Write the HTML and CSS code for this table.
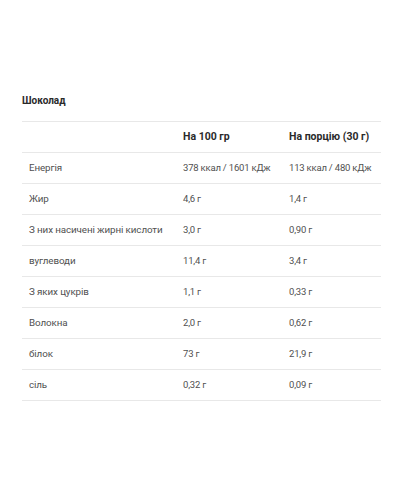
FILE: index.html
```html
<!DOCTYPE html>
<html lang="uk">
<head>
<meta charset="utf-8">
<link rel="stylesheet" href="styles.css">
</head>
<body>
<div class="wrap">
  <h2 class="title">Шоколад</h2>
  <table class="nutri">
    <colgroup><col class="c1"><col class="c2"><col class="c3"></colgroup>
    <thead>
      <tr><th></th><th>На 100 гр</th><th>На порцію (30 г)</th></tr>
    </thead>
    <tbody>
      <tr><td>Енергія</td><td class="num">378 ккал / 1601 кДж</td><td class="num">113 ккал / 480 кДж</td></tr>
      <tr><td>Жир</td><td class="num">4,6 г</td><td class="num">1,4 г</td></tr>
      <tr><td>З них насичені жирні кислоти</td><td class="num">3,0 г</td><td class="num">0,90 г</td></tr>
      <tr><td>вуглеводи</td><td class="num">11,4 г</td><td class="num">3,4 г</td></tr>
      <tr><td>З яких цукрів</td><td class="num">1,1 г</td><td class="num">0,33 г</td></tr>
      <tr><td>Волокна</td><td class="num">2,0 г</td><td class="num">0,62 г</td></tr>
      <tr><td>білок</td><td class="num">73 г</td><td class="num">21,9 г</td></tr>
      <tr><td>сіль</td><td class="num">0,32 г</td><td class="num">0,09 г</td></tr>
    </tbody>
  </table>
</div>
</body>
</html>
```
FILE: styles.css
```css
html, body {
  margin: 0;
  padding: 0;
  background: #ffffff;
}
body {
  font-family: Roboto, "Noto Sans", sans-serif;
  color: #505050;
}
.wrap {
  padding: 93px 19px 0 22px;
}
.title {
  margin: 0 0 12px 0;
  font-size: 10px;
  font-weight: 700;
  color: #2a2a2a;
  line-height: 16px;
}
.nutri {
  width: 359px;
  border-collapse: collapse;
  font-size: 9.8px;
  letter-spacing: -0.1px;
  table-layout: fixed;
}
.nutri th, .nutri td {
  text-align: left;
  padding: 0 7px;
  height: 30px;
  border-top: 1px solid #e8e8e8;
  border-bottom: 1px solid #e8e8e8;
  white-space: nowrap;
  line-height: 14px;
}
.nutri th {
  font-weight: 700;
  font-size: 10.5px;
  letter-spacing: 0;
  color: #2a2a2a;
}
.nutri .num {
  font-size: 9.5px;
  letter-spacing: -0.2px;
}
.c1 { width: 154px; }
.c2 { width: 106px; }
.c3 { width: 99px; }
```
